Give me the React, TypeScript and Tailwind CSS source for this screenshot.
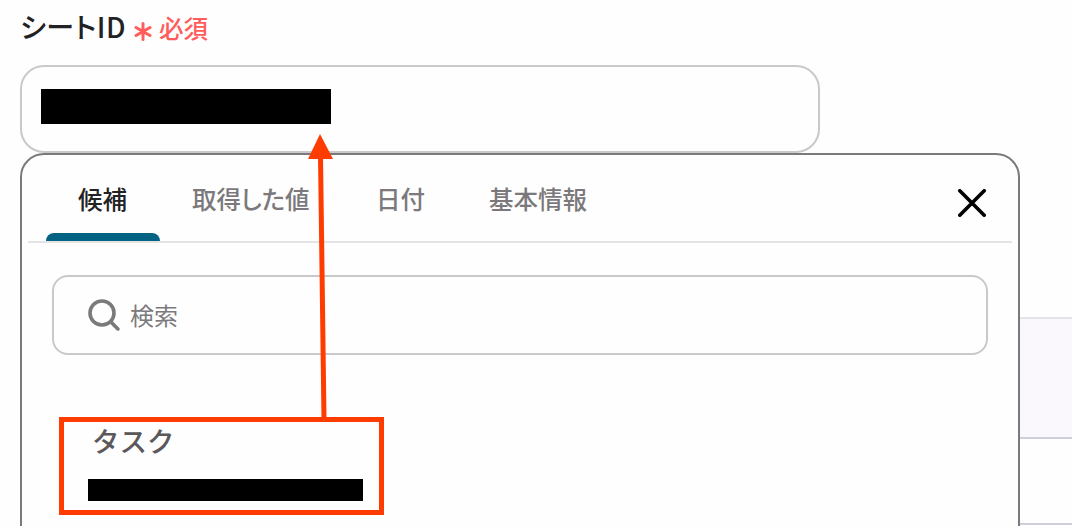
import { useState } from "react"
import clsx from "clsx"

const tabs = [
  { label: "候補", width: "w-[114px]" },
  { label: "取得した値", width: "w-[184px]" },
  { label: "日付", width: "w-[113px]" },
  { label: "基本情報", width: "w-[162px]" },
]

function FieldLabel() {
  return (
    <div className="flex h-[65px] shrink-0 items-start pt-2 leading-9">
      <span className="w-[114px] text-[28px] font-medium tracking-[0.6px] whitespace-nowrap text-[#222225] [font-feature-settings:'palt']">シートID</span>
      <svg className="mt-[14px] h-[19px] w-[18px]" viewBox="0 0 18 19" fill="none" stroke="#ff5c5c" strokeWidth="3" strokeLinecap="round">
        <path d="M9 1.5v16M2 5.5l14 8M16 5.5l-14 8" />
      </svg>
      <span className="ml-[7px] pt-[2px] text-[24.5px] font-medium text-[#ff5c5c]">必須</span>
    </div>
  )
}

function TabBar() {
  const [active, setActive] = useState(0)

  return (
    <div className="mx-1.5 flex h-[88px] border-b-2 border-[#e4e3e6] pl-[18px]">
      {tabs.map((tab, index) => (
        <button
          key={tab.label}
          onClick={() => setActive(index)}
          className={clsx(
            "flex h-full shrink-0 flex-col justify-between whitespace-nowrap text-left text-[24.5px] font-medium [font-feature-settings:'palt']",
            tab.width,
            index === active ? "text-[#222225]" : "text-[#7b797b]",
          )}
        >
          <span className="pt-[26px] pl-8 leading-9">{tab.label}</span>
          {index === active && <span className="h-2 w-full rounded-t-lg bg-[#046283]" />}
        </button>
      ))}
      <button aria-label="閉じる" className="mt-[34px] mr-[26px] ml-auto h-7 w-7">
        <svg viewBox="0 0 28 28" fill="none" stroke="#000" strokeWidth="3.6" strokeLinecap="round">
          <path d="M1.8 1.8l24.4 24.4M26.2 1.8L1.8 26.2" />
        </svg>
      </button>
    </div>
  )
}

function SearchBox() {
  return (
    <div className="mx-[30px] mt-8 flex h-20 items-center rounded-2xl border-2 border-[#c9c8ca] pl-[34px]">
      <svg className="h-8 w-8" viewBox="0 0 32 32" fill="none" stroke="#7b797b" strokeWidth="3.6" strokeLinecap="round">
        <circle cx="14" cy="14" r="12" />
        <path d="M22.7 22.7l7.2 7.2" />
      </svg>
      <span className="ml-2.5 text-2xl text-[#7b797b]">検索</span>
    </div>
  )
}

function Arrow() {
  return (
    <svg className="pointer-events-none absolute top-[134px] left-[300px] h-[285px] w-10" viewBox="0 0 40 285" fill="#ff3c00">
      <path d="M20 0l13 25H8z" />
      <path d="M20.5 22L24 285" stroke="#ff3c00" strokeWidth="5" />
    </svg>
  )
}

export default function App() {
  return (
    <div className="relative flex h-[526px] w-[1072px] overflow-hidden bg-[#fefefe] font-['Noto_Sans_CJK_JP',sans-serif]">
      <main className="flex w-[1020px] shrink-0 flex-col pl-5">
        <FieldLabel />
        <div className="h-[88px] w-[800px] shrink-0 rounded-3xl border-2 border-[#c9c8ca] pt-[22px] pl-[19px]">
          <div className="h-[35px] w-[290px] bg-black" />
        </div>
        <section className="h-[400px] shrink-0 rounded-t-3xl border-2 border-[#7b797b]">
          <TabBar />
          <SearchBox />
          <div className="mt-[62px] ml-[37px] h-[98px] w-[325px] border-5 border-[#ff3c00] pl-6">
            <div className="pl-1 text-[27.5px] leading-9 font-medium text-[#5a585a]">タスク</div>
            <div className="mt-[21px] h-[22px] w-[275px] bg-black" />
          </div>
        </section>
      </main>
      <aside className="flex flex-1 flex-col pt-[317px]">
        <div className="h-[122px] shrink-0 border-y-2 border-t-[#e4e3e6] border-b-[#cfcedb] bg-[#faf8fc]" />
        <div className="h-[86px] shrink-0 border-b-2 border-[#cfcedb]" />
      </aside>
      <Arrow />
    </div>
  )
}
